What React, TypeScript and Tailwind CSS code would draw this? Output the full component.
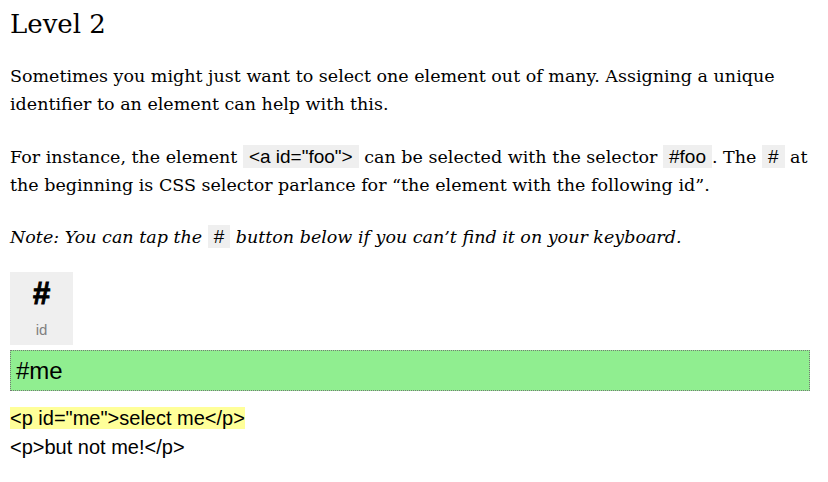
import React from "react";

function Code({ children }: { children: React.ReactNode }) {
  return (
    <code className="bg-[#efefef] px-[6px] py-[1px] text-[19px] font-['Liberation_Sans',Arial,sans-serif] not-italic">
      {children}
    </code>
  );
}

export default function App() {
  return (
    <div className="w-[828px] h-[482px] bg-white text-black pl-[10px] pr-[18px] font-['DejaVu_Serif',serif]">
      <h1 className="text-[26px] leading-[36px] pt-[6px] m-0 font-normal">Level 2</h1>
      <p className="text-[17.5px] leading-[28px] mt-[20px] whitespace-nowrap">
        Sometimes you might just want to select one element out of many. Assigning a unique
        <br />
        identifier to an element can help with this.
      </p>
      <p className="text-[17.5px] leading-[28px] mt-[25px] whitespace-nowrap">
        For instance, the element <Code>&lt;a id="foo"&gt;</Code> can be selected with the selector <Code>#foo</Code>. The <Code>#</Code> at
        <br />
        the beginning is CSS selector parlance for “the element with the following id”.
      </p>
      <p className="text-[17.5px] leading-[28px] mt-[24px] italic whitespace-nowrap">
        Note: You can tap the <Code>#</Code> button below if you can’t find it on your keyboard.
      </p>
      <div className="mt-[21px] flex flex-col">
        <div className="w-[63px] h-[73px] bg-[#efefef] flex flex-col items-center pt-[7px] font-['Liberation_Sans',Arial,sans-serif]">
          <span className="text-[31px] font-bold leading-[30px] [-webkit-text-stroke:1px_black]">#</span>
          <span className="text-[15px] text-[#808080] leading-[17px] mt-[12px]">id</span>
        </div>
        <div className="mt-[5px] w-[800px] h-[41px] bg-[#90ee90] border border-dotted border-[#777] flex items-center pl-[5px] font-['Liberation_Sans',Arial,sans-serif] text-[24px]">
          #me
        </div>
        <div className="mt-[16px] font-['Liberation_Sans',Arial,sans-serif] text-[20px] leading-[22px]">
          <div><span className="bg-[#ffff99]">&lt;p id="me"&gt;select me&lt;/p&gt;</span></div>
          <div className="mt-[7px]">&lt;p&gt;but not me!&lt;/p&gt;</div>
        </div>
      </div>
    </div>
  );
}
